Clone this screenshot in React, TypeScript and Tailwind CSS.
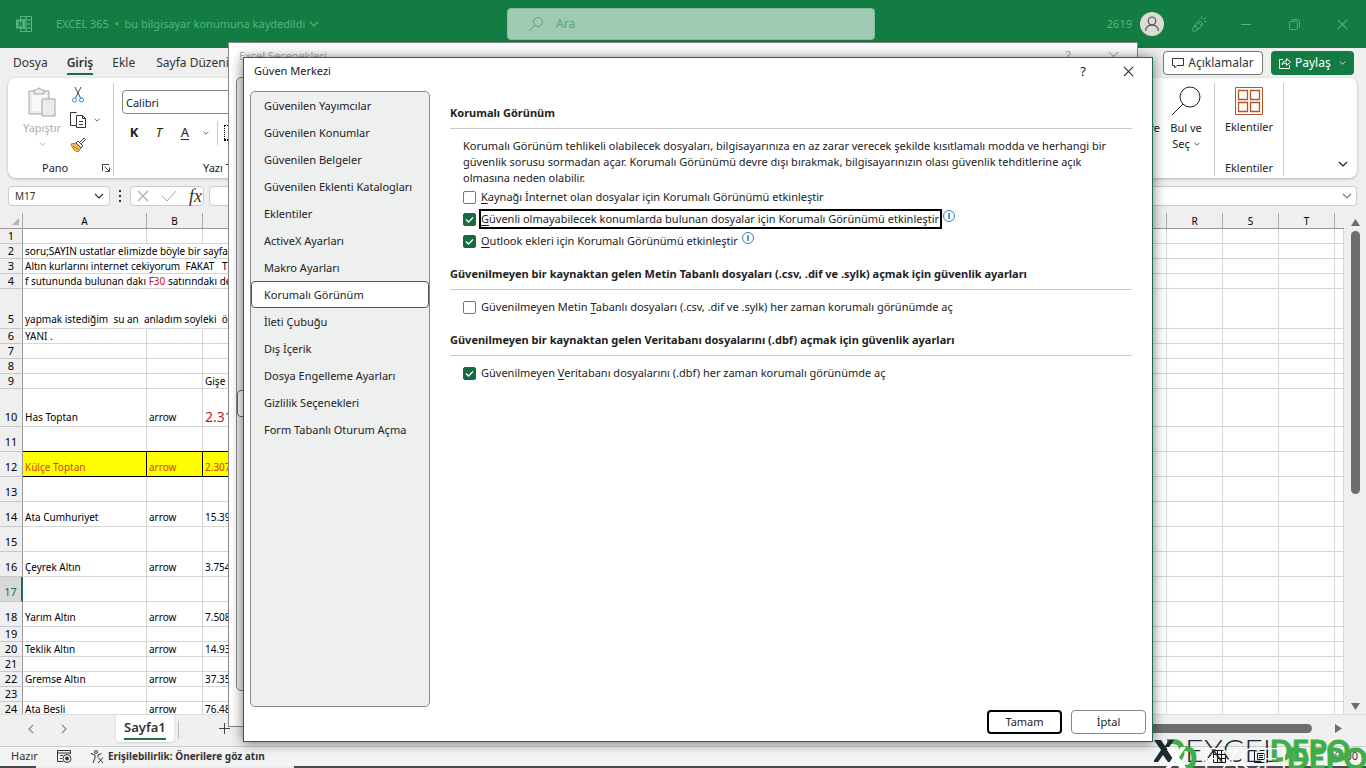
import { useState, type ReactNode } from "react";

type Row = {
  height: number;
  a?: ReactNode;
  b?: string;
  c?: string;
  big?: boolean;
  highlight?: boolean;
  merged?: boolean;
  active?: boolean;
};

const rows: Row[] = [
  { height: 15 },
  { height: 15, a: "soru;SAYIN ustatlar elimizde böyle bir sayfa", merged: true },
  { height: 15, a: "Altın kurlarını internet cekiyorum  FAKAT   TL", merged: true },
  {
    height: 15,
    a: (
      <>
        f sutununda bulunan dakı <span className="text-[#c8102e]">F30</span> satırındakı de
      </>
    ),
    merged: true,
  },
  { height: 40, a: "yapmak istediğim  su an  anladım soyleki  ör", merged: true },
  { height: 15, a: "YANI ." },
  { height: 15 },
  { height: 15 },
  { height: 15, c: "Gişe A" },
  { height: 38, a: "Has Toptan", b: "arrow", c: "2.31", big: true },
  { height: 25 },
  { height: 25, a: "Külçe Toptan", b: "arrow", c: "2.307", highlight: true },
  { height: 25 },
  { height: 25, a: "Ata Cumhuriyet", b: "arrow", c: "15.39" },
  { height: 25 },
  { height: 25, a: "Çeyrek Altın", b: "arrow", c: "3.754" },
  { height: 25, active: true },
  { height: 25, a: "Yarım Altın", b: "arrow", c: "7.508" },
  { height: 15 },
  { height: 15, a: "Teklik Altın", b: "arrow", c: "14.93" },
  { height: 15 },
  { height: 15, a: "Gremse Altın", b: "arrow", c: "37.35" },
  { height: 15 },
  { height: 15, a: "Ata Besli", b: "arrow", c: "76.48" },
];

const middleColumns = "DEFGHIJKLMNOPQ".split("");
const lastColumns = ["R", "S", "T"];

const menuItems = [
  "Güvenilen Yayımcılar",
  "Güvenilen Konumlar",
  "Güvenilen Belgeler",
  "Güvenilen Eklenti Katalogları",
  "Eklentiler",
  "ActiveX Ayarları",
  "Makro Ayarları",
  "Korumalı Görünüm",
  "İleti Çubuğu",
  "Dış İçerik",
  "Dosya Engelleme Ayarları",
  "Gizlilik Seçenekleri",
  "Form Tabanlı Oturum Açma",
];

function Chevron({ className = "" }: { className?: string }) {
  return (
    <svg viewBox="0 0 10 6" className={className} fill="none" stroke="currentColor" strokeWidth="1.2" aria-hidden="true">
      <path d="M1 1l4 4 4-4" />
    </svg>
  );
}

function Cross({ className = "" }: { className?: string }) {
  return (
    <svg viewBox="0 0 12 12" className={className} fill="none" stroke="currentColor" strokeWidth="1.1" aria-hidden="true">
      <path d="M1 1l10 10M11 1L1 11" />
    </svg>
  );
}

function TitleBar() {
  return (
    <header className="flex h-12 shrink-0 items-center bg-[#127c42] text-[#55b583]">
      <div className="flex flex-1 items-center pl-4">
        <svg viewBox="0 0 16 16" className="h-4 w-4" fill="none" stroke="currentColor" aria-hidden="true">
          <path d="M4.500 3.500V.5h11v15h-11v-3M10 .5v15M4.500 4h11M10 8h5.500M4.500 12h11" />
          <path d="M0 3.500h9v9H0z" fill="currentColor" stroke="none" />
          <path d="M2.500 5.500l4 5M6.500 5.500l-4 5" stroke="#127c42" strokeWidth="1.300" />
        </svg>
        <button type="button" className="ml-6 flex items-center gap-1 text-[11px] whitespace-pre">
          EXCEL 365  •  bu bilgisayar konumuna kaydedildi
          <Chevron className="h-[6px] w-[10px]" />
        </button>
      </div>
      <label className="flex h-8 w-[368px] items-center rounded-sm border border-[#7fbf9b] bg-[#a0cab3] px-5 text-[#58a67c]">
        <svg viewBox="0 0 16 16" className="h-4 w-4" fill="none" stroke="currentColor" aria-hidden="true">
          <circle cx="10" cy="6" r="4.500" />
          <path d="M6.800 9.200L1 15" />
        </svg>
        <input
          type="text"
          aria-label="Ara"
          placeholder="Ara"
          className="ml-3 w-40 bg-transparent text-xs outline-none placeholder:text-[#58a67c]"
        />
      </label>
      <div className="flex flex-1 items-center justify-end text-[11px]">
        <span>2619</span>
        <span className="ml-2 flex h-6 w-6 items-center justify-center rounded-full bg-[#dcdcd4] text-[#5d615d]">
          <svg viewBox="0 0 16 16" className="h-4 w-4" fill="none" stroke="currentColor" strokeWidth="1.300" aria-hidden="true">
            <circle cx="8" cy="5" r="3.800" />
            <path d="M1.500 15c.4-3.500 2.700-6 6.500-6s6.100 2.500 6.500 6" />
          </svg>
        </span>
        <button type="button" aria-label="Yenilikler" className="ml-[27px]">
          <svg viewBox="0 0 16 16" className="h-4 w-4" fill="none" stroke="currentColor" aria-hidden="true">
            <path d="M8.500 4.500l3.500 3.500-1.500 2.500-6 4.500q-3 1.500-3-1.500L6.500 6zM3.500 9.500l4 3.500M7 6l4 4M10.500 3V.5M12.500 3.500l2.500-2.500M13 5.500h2.500" />
          </svg>
        </button>
        <button type="button" aria-label="Küçült" className="ml-[30px] h-4 w-[18px]">
          <span className="mx-1 block h-px bg-current" />
        </button>
        <button type="button" aria-label="Önceki boyut" className="ml-[34px]">
          <svg viewBox="0 0 12 12" className="h-[11px] w-[11px]" fill="none" stroke="currentColor" aria-hidden="true">
            <rect x=".5" y="2.500" width="8.500" height="9" rx="1.500" />
            <path d="M3 1.500Q3 .5 4.500.5H9q2.500 0 2.500 2.500v5.500q0 1-1 1" />
          </svg>
        </button>
        <button type="button" aria-label="Kapat" className="mr-[18px] ml-[37px]">
          <Cross className="h-[11px] w-[11px]" />
        </button>
      </div>
    </header>
  );
}

function RibbonTabs() {
  return (
    <nav className="flex h-[30px] shrink-0 items-center text-xs text-[#333]">
      <button type="button" className="ml-[13px]">Dosya</button>
      <button type="button" className="ml-[19px] border-b-2 border-[#1d6b47] pt-[2px] leading-5 font-semibold">Giriş</button>
      <button type="button" className="ml-[19px]">Ekle</button>
      <button type="button" className="ml-[21px]">Sayfa Düzeni</button>
      <button type="button" className="ml-auto flex h-6 w-[100px] items-center justify-center gap-1 rounded border border-[#777] bg-white">
        <svg viewBox="0 0 12 12" className="h-3 w-3" fill="none" stroke="currentColor" aria-hidden="true">
          <path d="M.5 1.500h11v7H5L2.500 11V8.500h-2z" />
        </svg>
        Açıklamalar
      </button>
      <button type="button" className="mr-3 ml-2 flex h-6 w-[83px] items-center rounded bg-[#127c42] px-2 text-white">
        <svg viewBox="0 0 12 12" className="h-3 w-3" fill="none" stroke="currentColor" aria-hidden="true">
          <path d="M4 2.500H.5v9h10V8M3 8c0-3 2-4 4.500-4V1.500l4 3.500-4 3.500V6C5.500 6 4 6.500 3 8z" />
        </svg>
        <span className="ml-1">Paylaş</span>
        <Chevron className="ml-auto h-1 w-[7px]" />
      </button>
    </nav>
  );
}

function Ribbon() {
  return (
    <section className="mr-[9px] ml-2 flex h-[100px] shrink-0 rounded-lg bg-white pt-[5px] pb-[2px] text-[11px] text-[#222] shadow-[0_1px_3px_rgba(0,0,0,0.25)]">
      <div className="flex w-[106px] shrink-0 flex-col border-r border-[#ccc]">
        <div className="flex flex-1">
          <button type="button" className="ml-[10px] flex w-12 flex-col items-center pt-1 text-[#ababab]">
            <svg viewBox="0 0 28 31" className="h-[31px] w-7" fill="#ececec" stroke="#a5a5a5" aria-hidden="true">
              <path d="M1 4h20v23H1z" />
              <path d="M4 7h14v17H4z" fill="#f8f8f8" stroke="none" />
              <path d="M6 7V3h2.500q2.500-4 5 0H16v4z" />
              <path d="M14 12h13v17H14z" />
            </svg>
            <span className="leading-5">Yapıştır</span>
            <Chevron className="mt-1 h-1 w-[7px]" />
          </button>
          <div className="ml-1 flex flex-col gap-[9px] pt-1">
            <button type="button" aria-label="Kes">
              <svg viewBox="0 0 16 16" className="h-4 w-4" fill="none" aria-hidden="true">
                <path d="M5 0l5.500 11M11 0L5.500 11" stroke="#444" />
                <circle cx="4.500" cy="13" r="2" stroke="#2b88d8" />
                <circle cx="11.500" cy="13" r="2" stroke="#2b88d8" />
              </svg>
            </button>
            <button type="button" aria-label="Kopyala" className="flex items-center gap-2">
              <svg viewBox="0 0 16 16" className="h-4 w-4" fill="#fff" stroke="#333" aria-hidden="true">
                <path d="M6 13.500H.5V.5h6" />
                <path d="M6.500 3.500h6l3 3v9h-9zM12.500 3.500v3h3M9 9.500h4M9 12.500h4" />
              </svg>
              <Chevron className="h-1 w-[6px]" />
            </button>
            <button type="button" aria-label="Biçim Boyacısı">
              <svg viewBox="0 0 16 16" className="h-4 w-4" aria-hidden="true">
                <path d="M1 7l5-1 5 5-3 4q-5-1-7-8z" fill="#f5b95f" stroke="#c8741c" />
                <path d="M3 9l6 4" stroke="#c8741c" />
                <path d="M6 6l2-2 5 5-2 2zM10 5l4-4 1.500 1.500-4 4" fill="#fff" stroke="#444" />
              </svg>
            </button>
          </div>
        </div>
        <div className="flex h-4 items-center">
          <span className="ml-[34px]">Pano</span>
          <button type="button" aria-label="Pano ayarları" className="mr-[3px] ml-auto">
            <svg viewBox="0 0 9 9" className="h-2 w-2" fill="none" stroke="currentColor" aria-hidden="true">
              <path d="M.5 8V.5H8M3 3l5 5M8.500 4v4.500H4" />
            </svg>
          </button>
        </div>
      </div>
      <div className="flex w-[230px] shrink-0 flex-col pl-2">
        <input type="text" aria-label="Yazı tipi" defaultValue="Calibri" className="mt-[7px] h-6 w-40 rounded border border-[#888] px-[3px] text-[11px]" />
        <div className="mt-[7px] flex h-6 items-center text-[13px]">
          <button type="button" className="w-6 font-bold">K</button>
          <button type="button" className="ml-[3px] w-5 italic">T</button>
          <button type="button" className="ml-[6px] w-5 underline underline-offset-2">A</button>
          <Chevron className="ml-2 h-1 w-[6px]" />
          <span className="ml-2 h-6 w-px bg-[#ccc]" />
          <button type="button" aria-label="Kenarlıklar" className="ml-[6px] h-4 w-4 border border-b-2 border-dotted border-black" />
        </div>
        <span className="mt-auto ml-[81px] leading-4">Yazı Tipi</span>
      </div>
      <div className="ml-auto flex shrink-0 text-center">
        <button type="button" className="mt-[37px] w-12 self-start text-right leading-4">Filtre</button>
        <button type="button" className="mr-2 ml-[6px] flex w-10 flex-col items-center pt-[3px]">
          <svg viewBox="0 0 30 30" className="h-[30px] w-[30px]" fill="none" stroke="currentColor" aria-hidden="true">
            <circle cx="19" cy="11" r="10" />
            <path d="M12 18L1 29" />
          </svg>
          <span className="mt-1 leading-4 whitespace-nowrap">Bul ve</span>
          <span className="flex items-center gap-1 leading-4">
            Seç <Chevron className="h-1 w-[6px]" />
          </span>
        </button>
        <div className="flex w-[70px] flex-col items-center border-x border-[#ccc] pt-1">
          <svg viewBox="0 0 28 28" className="h-7 w-7" fill="none" stroke="#b5532b" aria-hidden="true">
            <path d="M.5.5h27v27H.5z" />
            <path d="M3.500 3.500h9v9h-9zM15.500 3.500h9v9h-9zM3.500 15.500h9v9h-9zM15.500 15.500h9v9h-9z" strokeWidth="1.300" />
          </svg>
          <button type="button" className="mt-1 leading-4">Eklentiler</button>
          <span className="mt-auto leading-4">Eklentiler</span>
        </div>
        <button type="button" aria-label="Şeridi daralt" className="mr-[9px] mb-1 ml-[54px] self-end pb-[5px]">
          <Chevron className="h-[6px] w-[10px]" />
        </button>
      </div>
    </section>
  );
}

function FormulaBar() {
  return (
    <div className="mt-2 mr-[9px] ml-2 flex h-5 shrink-0 items-center text-[10px] text-[#333]">
      <label className="flex h-5 w-[102px] items-center rounded border border-[#ccc] bg-white pr-[5px] pl-[6px]">
        <input type="text" aria-label="Ad kutusu" defaultValue="M17" className="min-w-0 flex-1 outline-none" />
        <Chevron className="h-[6px] w-[10px]" />
      </label>
      <span className="mx-[9px] flex w-[2px] flex-col items-center gap-[3px]">
        <i className="h-[2px] w-[2px] bg-[#333]" />
        <i className="h-[2px] w-[2px] bg-[#333]" />
        <i className="h-[2px] w-[2px] bg-[#333]" />
      </span>
      <div className="flex h-5 w-[74px] items-center gap-3 rounded border border-[#ccc] bg-white px-[6px]">
        <Cross className="h-3 w-3 shrink-0 text-[#aaa]" />
        <svg viewBox="0 0 16 12" className="h-3 w-4 shrink-0" fill="none" stroke="#aaa" aria-hidden="true">
          <path d="M1 6l5 5L15 1" />
        </svg>
        <button type="button" className="font-['Liberation_Serif',serif] text-lg leading-4 italic">fx</button>
      </div>
      <label className="ml-[5px] flex h-5 flex-1 items-center rounded border border-[#ccc] bg-white pr-1">
        <input type="text" aria-label="Formül çubuğu" className="min-w-0 flex-1 outline-none" />
        <Chevron className="h-[6px] w-[10px] text-[#777]" />
      </label>
    </div>
  );
}

function Sheet() {
  const cell = "overflow-visible border-r border-b p-0 pl-[2px] align-bottom whitespace-pre leading-[14px]";
  const head = "border-r border-b border-r-[#aaa] border-b-[#999] p-0 pt-[2px] leading-[13px] font-normal";

  return (
    <div className="mt-[7px] flex min-h-0 flex-1">
      <div className="min-w-0 flex-1 overflow-hidden">
        <table className="w-full table-fixed border-separate border-spacing-0 bg-white text-[10px] text-black">
          <colgroup>
            <col className="w-[23px]" />
            <col className="w-[124px]" />
            <col className="w-[56px]" />
            <col />
            {middleColumns.map((name) => (
              <col key={name} className="w-[56px]" />
            ))}
            {lastColumns.map((name) => (
              <col key={name} className="w-[56px]" />
            ))}
            <col className="w-[9px]" />
          </colgroup>
          <thead className="bg-[#f0eff0]">
            <tr className="h-4">
              <th className={head} aria-label="Tümünü seç">
                <svg viewBox="0 0 7 7" className="ml-3 h-[7px] w-[7px]" fill="#b4b4b4" aria-hidden="true">
                  <path d="M7 0v7H0z" />
                </svg>
              </th>
              {["A", "B", "C", ...middleColumns, ...lastColumns].map((name) => (
                <th key={name} className={head}>{name}</th>
              ))}
              <th className="border-b border-[#999] p-0" />
            </tr>
          </thead>
          <tbody>
            {rows.map((row, index) => {
              const tone = row.highlight
                ? "border-r-black border-b-black bg-[#ffff00] text-[#d83a1c] shadow-[0_-1px_0_black]"
                : row.merged
                  ? "border-r-transparent border-b-[#d6d6d6]"
                  : "border-[#d6d6d6]";
              const lift = row.height > 15 ? "pb-[2px]" : "";
              return (
                <tr key={index} style={{ height: row.height }}>
                  <th
                    className={`border-r border-b border-b-[#c8c8c8] p-0 align-bottom text-[11px] leading-[14px] font-normal ${lift} ${
                      row.active ? "border-r-2 border-r-[#1d7044] bg-[#d8d8d8] text-[#1d6b47]" : "border-r-[#999] bg-[#f0eff0]"
                    }`}
                  >
                    {index + 1}
                  </th>
                  <td className={`${cell} ${tone} ${lift}`}>{row.a}</td>
                  <td className={`${cell} ${tone} ${lift}`}>{row.b}</td>
                  <td className={`${cell} ${tone} ${lift} ${row.big ? "text-sm text-[#c8202e]" : ""}`}>{row.c}</td>
                  {middleColumns.map((name) => (
                    <td key={name} className="border-r border-b border-[#d6d6d6] p-0" />
                  ))}
                  {lastColumns.map((name) => (
                    <td key={name} className="border-r border-b border-[#d6d6d6] p-0" />
                  ))}
                  <td className="border-r border-b border-[#d6d6d6] p-0" />
                </tr>
              );
            })}
          </tbody>
        </table>
      </div>
      <div className="flex w-[22px] flex-col items-center text-[#6e6e6e]">
        <svg viewBox="0 0 9 7" className="mt-[6px] h-[7px] w-[9px]" fill="currentColor" aria-hidden="true">
          <path d="M4.500 0L9 7H0z" />
        </svg>
        <span className="mt-[5px] h-[263px] w-[9px] rounded-full bg-current" />
        <svg viewBox="0 0 9 7" className="mt-auto mb-1 h-[7px] w-[9px]" fill="currentColor" aria-hidden="true">
          <path d="M0 0h9L4.500 7z" />
        </svg>
      </div>
    </div>
  );
}

function SheetTabs() {
  return (
    <div className="flex h-8 shrink-0 border-t border-[#ddd] bg-[#f0f0f0] text-[#444]">
      <button type="button" aria-label="Önceki sayfa" className="mb-1 ml-[26px]">
        <Chevron className="h-[6px] w-[10px] rotate-90 text-[#888]" />
      </button>
      <button type="button" aria-label="Sonraki sayfa" className="mb-1 ml-[23px]">
        <Chevron className="h-[6px] w-[10px] -rotate-90 text-[#888]" />
      </button>
      <button type="button" className="ml-[47px] h-[27px] rounded-b bg-white px-2 text-[13px] font-semibold text-[#333] shadow-sm">
        <span className="block border-b-2 border-[#217346] leading-[21px]">Sayfa1</span>
      </button>
      <span className="mt-[6px] ml-1 h-[18px] w-px bg-[#bbb]" />
      <button type="button" aria-label="Yeni sayfa" className="mb-1 ml-[40px]">
        <svg viewBox="0 0 11 11" className="h-[11px] w-[11px]" stroke="currentColor" aria-hidden="true">
          <path d="M5.500 0v11M0 5.500h11" />
        </svg>
      </button>
      <div className="ml-auto flex items-center pb-1">
        <span className="h-[9px] w-[360px] rounded-full bg-[#6e6e6e]" />
        <svg viewBox="0 0 7 9" className="mr-[24px] ml-[23px] h-[9px] w-[7px]" fill="#6e6e6e" aria-hidden="true">
          <path d="M0 0l7 4.500L0 9z" />
        </svg>
      </div>
    </div>
  );
}

function StatusBar() {
  return (
    <footer className="shrink-0">
      <div className="flex h-5 items-center border-t border-[#ccc] bg-[#f3f4f4] text-[11px] text-[#333]">
        <span className="ml-[11px]">Hazır</span>
        <svg viewBox="0 0 15 13" className="ml-[19px] h-[13px] w-[15px]" fill="none" stroke="currentColor" aria-hidden="true">
          <path d="M6 11.500H.5V.5h13V4M.5 3h13M3 5.500h3M3 8.500h2" />
          <circle cx="10" cy="8.500" r="4" />
          <circle cx="10" cy="8.500" r="1.500" fill="currentColor" />
        </svg>
        <svg viewBox="0 0 14 14" className="ml-[18px] h-[14px] w-[14px]" fill="none" stroke="currentColor" aria-hidden="true">
          <circle cx="6" cy="2" r="1.500" />
          <path d="M.8 3.500L5 5v3l-2 5M11.500 3.500L8 5v2M8 7.500l5 5.500M13 7.500L8 13" />
        </svg>
        <button type="button" className="ml-1 text-[10px] font-bold">Erişilebilirlik: Önerilere göz atın</button>
        <div className="ml-auto flex items-center">
          <svg viewBox="0 0 13 13" className="mr-7 h-[13px] w-[13px]" fill="none" stroke="#111" aria-hidden="true">
            <path d="M.5.500h12v12H.5zM.5 4.500h12M.5 8.500h12M4.500.500v12M8.500.500v12" />
          </svg>
          <svg viewBox="0 0 14 13" className="mr-[62px] h-[13px] w-[14px]" fill="none" stroke="#111" aria-hidden="true">
            <path d="M.5.500h13v12H.5zM3.500 3.500h7v6h-7zM5 5.500h4M5 7.500h4" />
          </svg>
          <span className="mr-[8px]">%100</span>
        </div>
      </div>
      <div className="flex h-[2px] bg-[#4a4a4a]">
        <span className="ml-9 w-[258px] bg-[#ededed]" />
      </div>
    </footer>
  );
}

function Watermark() {
  const copies = [
    { mark: "translate(0 0)", word: "translate(0 0)", color: "#1c2b33" },
    { mark: "translate(12 7)", word: "translate(17 8)", color: "#ffffff" },
  ];
  return (
    <svg viewBox="0 0 212 32" className="pointer-events-none absolute right-0 bottom-0 h-8 w-[212px]" role="img" aria-label="EXCEL DEPO">
      {copies.map((copy) => (
        <g key={copy.color}>
          <g transform={copy.mark}>
            <path d="M13 5.500h6q9 0 9 9.500T19 24.500h-4" fill="none" stroke="#3fae49" strokeWidth="5" />
            <path d="M0 4h7l4 6 4-6h5l-7 10 8 12h-7l-5-7-5 7H-1l8-12z" fill={copy.color} />
          </g>
          <g transform={copy.word}>
            <text x="31" y="26" className="font-['Lato',sans-serif] text-[32px] font-light" fill={copy.color}>EXCEL</text>
            <text x="116" y="25" className="font-['Lato',sans-serif] text-[29px] font-bold" fill="#3fae49" stroke="#3fae49">DEPO</text>
          </g>
        </g>
      ))}
    </svg>
  );
}

function InfoIcon() {
  return (
    <svg viewBox="0 0 12 12" className="mt-[2px] ml-px h-3 w-3 shrink-0 self-start" fill="none" stroke="#2f86a6" aria-hidden="true">
      <circle cx="6" cy="6" r="5.500" />
      <path d="M6 3v6" stroke="#2b6fc0" strokeWidth="1.500" />
    </svg>
  );
}

interface CheckRowProps {
  id: string;
  before?: string;
  accessKey: string;
  after: string;
  defaultChecked?: boolean;
  focused?: boolean;
  info?: boolean;
}

function CheckRow({ id, before = "", accessKey, after, defaultChecked, focused, info }: CheckRowProps) {
  return (
    <div className="ml-[13px] flex h-[22px] items-center">
      <span className="grid">
        <input
          id={id}
          type="checkbox"
          defaultChecked={defaultChecked}
          className="peer col-start-1 row-start-1 h-[13px] w-[13px] appearance-none rounded-[2px] border border-[#777] bg-white checked:border-[#176b43] checked:bg-[#176b43]"
        />
        <svg
          viewBox="0 0 13 13"
          className="pointer-events-none invisible col-start-1 row-start-1 h-[13px] w-[13px] peer-checked:visible"
          fill="none"
          stroke="#fff"
          strokeWidth="1.300"
          aria-hidden="true"
        >
          <path d="M3 6.500L5.500 9 10 4.500" />
        </svg>
      </span>
      <label htmlFor={id} className={`ml-[3px] border-2 pr-px leading-4 ${focused ? "border-black" : "border-transparent"}`}>
        {before}
        <u className="underline-offset-2">{accessKey}</u>
        {after}
      </label>
      {info && <InfoIcon />}
    </div>
  );
}

function SectionTitle({ children }: { children: ReactNode }) {
  return <h2 className="mt-[14px] border-b border-[#c8c8c8] pb-[7px] leading-4 font-bold">{children}</h2>;
}

function OptionsWindow() {
  return (
    <section aria-label="Excel Seçenekleri" className="absolute top-[42px] left-[228px] flex h-[685px] w-[910px] flex-col border border-[#888] bg-white text-[11px] text-[#b0b0b0]">
      <header className="flex h-[34px] shrink-0 items-center pr-[18px] pb-2 pl-[10px]">
        Excel Seçenekleri
        <span className="ml-auto text-[13px]">?</span>
        <Cross className="ml-[37px] h-[11px] w-[11px]" />
      </header>
      <div className="mb-[35px] ml-[7px] w-[180px] flex-1 rounded-[5px] border border-[#888] bg-[#eeefef] pt-[312px]">
        <div className="h-[27px] rounded border border-[#666] bg-white" />
      </div>
    </section>
  );
}

function TrustCenter() {
  const [selected, setSelected] = useState("Korumalı Görünüm");

  return (
    <section
      role="dialog"
      aria-label="Güven Merkezi"
      className="absolute top-[57px] left-[243px] flex h-[685px] w-[910px] flex-col border border-[#1d6b4f] bg-white text-[11px] text-[#222] shadow-[0_1px_12px_rgba(0,0,0,0.55)]"
    >
      <header className="flex h-[33px] shrink-0 items-center pr-[18px] pb-[6px] pl-[10px]">
        <h1>Güven Merkezi</h1>
        <button type="button" aria-label="Yardım" className="ml-auto text-[13px]">?</button>
        <button type="button" aria-label="Kapat" className="ml-[37px]">
          <Cross className="h-[11px] w-[11px]" />
        </button>
      </header>
      <div className="flex min-h-0 flex-1">
        <ul className="mb-[34px] ml-[6px] w-[180px] shrink-0 rounded-[5px] border border-[#888] bg-[#eeefef]">
          {menuItems.map((item) => (
            <li key={item}>
              <button
                type="button"
                onClick={() => setSelected(item)}
                className={`h-[27px] w-full rounded border pt-px pl-3 text-left ${
                  item === selected ? "border-[#555] bg-white" : "border-transparent"
                }`}
              >
                {item}
              </button>
            </li>
          ))}
        </ul>
        <div className="mr-[6px] ml-5 flex flex-1 flex-col">
          <div className="mr-[14px]">
            <SectionTitle>Korumalı Görünüm</SectionTitle>
            <p className="mt-[9px] mr-4 ml-[13px] leading-4">
              Korumalı Görünüm tehlikeli olabilecek dosyaları, bilgisayarınıza en az zarar verecek şekilde kısıtlamalı modda ve herhangi bir
              güvenlik sorusu sormadan açar. Korumalı Görünümü devre dışı bırakmak, bilgisayarınızın olası güvenlik tehditlerine açık
              olmasına neden olabilir.
            </p>
            <CheckRow id="internet" accessKey="K" after="aynağı İnternet olan dosyalar için Korumalı Görünümü etkinleştir" />
            <CheckRow
              id="locations"
              accessKey="G"
              after="üvenli olmayabilecek konumlarda bulunan dosyalar için Korumalı Görünümü etkinleştir"
              defaultChecked
              focused
              info
            />
            <CheckRow id="outlook" accessKey="O" after="utlook ekleri için Korumalı Görünümü etkinleştir" defaultChecked info />
            <SectionTitle>
              Güvenilmeyen bir kaynaktan gelen Metin Tabanlı dosyaları (.csv, .dif ve .sylk) açmak için güvenlik ayarları
            </SectionTitle>
            <div className="mt-[6px]">
              <CheckRow id="text-files" before="Güvenilmeyen Metin " accessKey="T" after="abanlı dosyaları (.csv, .dif ve .sylk) her zaman korumalı görünümde aç" />
            </div>
            <SectionTitle>Güvenilmeyen bir kaynaktan gelen Veritabanı dosyalarını (.dbf) açmak için güvenlik ayarları</SectionTitle>
            <div className="mt-[6px]">
              <CheckRow id="db-files" before="Güvenilmeyen " accessKey="V" after="eritabanı dosyalarını (.dbf) her zaman korumalı görünümde aç" defaultChecked />
            </div>
          </div>
          <div className="mt-auto mb-[7px] flex justify-end gap-[9px]">
            <button type="button" className="h-6 w-[75px] rounded border-2 border-black">Tamam</button>
            <button type="button" className="h-6 w-[75px] rounded border border-[#888]">İptal</button>
          </div>
        </div>
      </div>
    </section>
  );
}

export default function App() {
  return (
    <main className="relative flex h-screen flex-col overflow-hidden bg-[#f0eff0] font-['Noto_Sans',sans-serif]">
      <TitleBar />
      <RibbonTabs />
      <Ribbon />
      <FormulaBar />
      <Sheet />
      <SheetTabs />
      <StatusBar />
      <OptionsWindow />
      <Watermark />
      <TrustCenter />
    </main>
  );
}
